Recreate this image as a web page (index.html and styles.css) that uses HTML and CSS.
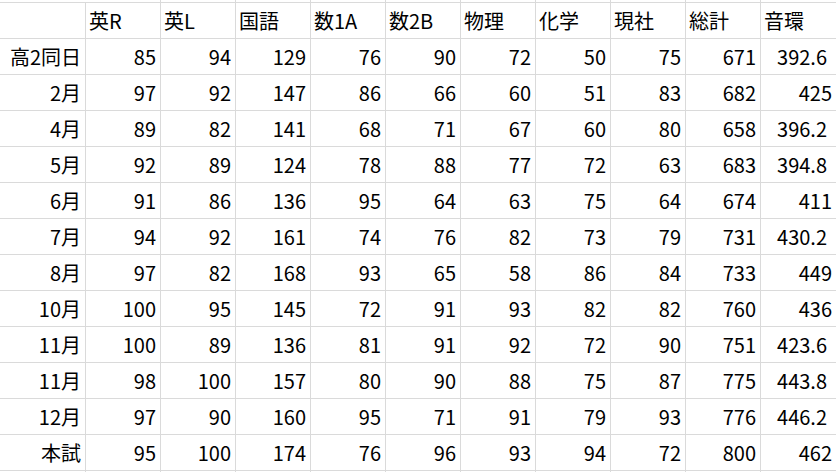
FILE: index.html
```html
<!DOCTYPE html>
<html lang="ja">
<head>
<meta charset="utf-8">
<title>成績表</title>
<link rel="stylesheet" href="styles.css">
</head>
<body>
<div class="sheet">
  <div class="c edge"></div><div class="c edge"></div><div class="c edge"></div><div class="c edge"></div><div class="c edge"></div><div class="c edge"></div><div class="c edge"></div><div class="c edge"></div><div class="c edge"></div><div class="c edge"></div><div class="c edge"></div>

  <div class="c lab"></div><div class="c h">英R</div><div class="c h">英L</div><div class="c h">国語</div><div class="c h">数1A</div><div class="c h">数2B</div><div class="c h">物理</div><div class="c h">化学</div><div class="c h">現社</div><div class="c h">総計</div><div class="c h">音環</div>

  <div class="c lab">高2同日</div><div class="c n">85</div><div class="c n">94</div><div class="c n">129</div><div class="c n">76</div><div class="c n">90</div><div class="c n">72</div><div class="c n">50</div><div class="c n">75</div><div class="c n">671</div><div class="c n dec">392.6</div>

  <div class="c lab">2月</div><div class="c n">97</div><div class="c n">92</div><div class="c n">147</div><div class="c n">86</div><div class="c n">66</div><div class="c n">60</div><div class="c n">51</div><div class="c n">83</div><div class="c n">682</div><div class="c n">425</div>

  <div class="c lab">4月</div><div class="c n">89</div><div class="c n">82</div><div class="c n">141</div><div class="c n">68</div><div class="c n">71</div><div class="c n">67</div><div class="c n">60</div><div class="c n">80</div><div class="c n">658</div><div class="c n dec">396.2</div>

  <div class="c lab">5月</div><div class="c n">92</div><div class="c n">89</div><div class="c n">124</div><div class="c n">78</div><div class="c n">88</div><div class="c n">77</div><div class="c n">72</div><div class="c n">63</div><div class="c n">683</div><div class="c n dec">394.8</div>

  <div class="c lab">6月</div><div class="c n">91</div><div class="c n">86</div><div class="c n">136</div><div class="c n">95</div><div class="c n">64</div><div class="c n">63</div><div class="c n">75</div><div class="c n">64</div><div class="c n">674</div><div class="c n">411</div>

  <div class="c lab">7月</div><div class="c n">94</div><div class="c n">92</div><div class="c n">161</div><div class="c n">74</div><div class="c n">76</div><div class="c n">82</div><div class="c n">73</div><div class="c n">79</div><div class="c n">731</div><div class="c n dec">430.2</div>

  <div class="c lab">8月</div><div class="c n">97</div><div class="c n">82</div><div class="c n">168</div><div class="c n">93</div><div class="c n">65</div><div class="c n">58</div><div class="c n">86</div><div class="c n">84</div><div class="c n">733</div><div class="c n">449</div>

  <div class="c lab">10月</div><div class="c n">100</div><div class="c n">95</div><div class="c n">145</div><div class="c n">72</div><div class="c n">91</div><div class="c n">93</div><div class="c n">82</div><div class="c n">82</div><div class="c n">760</div><div class="c n">436</div>

  <div class="c lab">11月</div><div class="c n">100</div><div class="c n">89</div><div class="c n">136</div><div class="c n">81</div><div class="c n">91</div><div class="c n">92</div><div class="c n">72</div><div class="c n">90</div><div class="c n">751</div><div class="c n dec">423.6</div>

  <div class="c lab">11月</div><div class="c n">98</div><div class="c n">100</div><div class="c n">157</div><div class="c n">80</div><div class="c n">90</div><div class="c n">88</div><div class="c n">75</div><div class="c n">87</div><div class="c n">775</div><div class="c n dec">443.8</div>

  <div class="c lab">12月</div><div class="c n">97</div><div class="c n">90</div><div class="c n">160</div><div class="c n">95</div><div class="c n">71</div><div class="c n">91</div><div class="c n">79</div><div class="c n">93</div><div class="c n">776</div><div class="c n dec">446.2</div>

  <div class="c lab">本試</div><div class="c n">95</div><div class="c n">100</div><div class="c n">174</div><div class="c n">76</div><div class="c n">96</div><div class="c n">93</div><div class="c n">94</div><div class="c n">72</div><div class="c n">800</div><div class="c n">462</div>

  <div class="c lab"></div><div class="c"></div><div class="c"></div><div class="c"></div><div class="c"></div><div class="c"></div><div class="c"></div><div class="c"></div><div class="c"></div><div class="c"></div><div class="c"></div>
</div>
</body>
</html>
```

FILE: styles.css
```css
html, body {
  margin: 0;
  padding: 0;
  background: #ffffff;
  overflow: hidden;
}

body {
  width: 836px;
  height: 472px;
}

.sheet {
  display: grid;
  grid-template-columns: 86px repeat(9, 75px) 76px;
  grid-template-rows: 3px repeat(14, 36px);
  height: 472px;
  overflow: hidden;
  font-family: "Noto Sans CJK JP", "Noto Sans", sans-serif;
  font-size: 20px;
  color: #000000;
}

.c {
  box-sizing: border-box;
  border-right: 1px solid #dadada;
  border-bottom: 1px solid #dadada;
  display: flex;
  align-items: center;
  white-space: nowrap;
  overflow: hidden;
  line-height: 1;
}

.c.lab {
  justify-content: flex-end;
  padding-right: 4px;
}

.c.edge:first-child {
  border-right: none;
}

.c.h {
  justify-content: flex-start;
  padding-left: 3px;
}

.c.n {
  justify-content: flex-end;
  padding-right: 4px;
}

.c.n.dec {
  padding-right: 9px;
}
```
